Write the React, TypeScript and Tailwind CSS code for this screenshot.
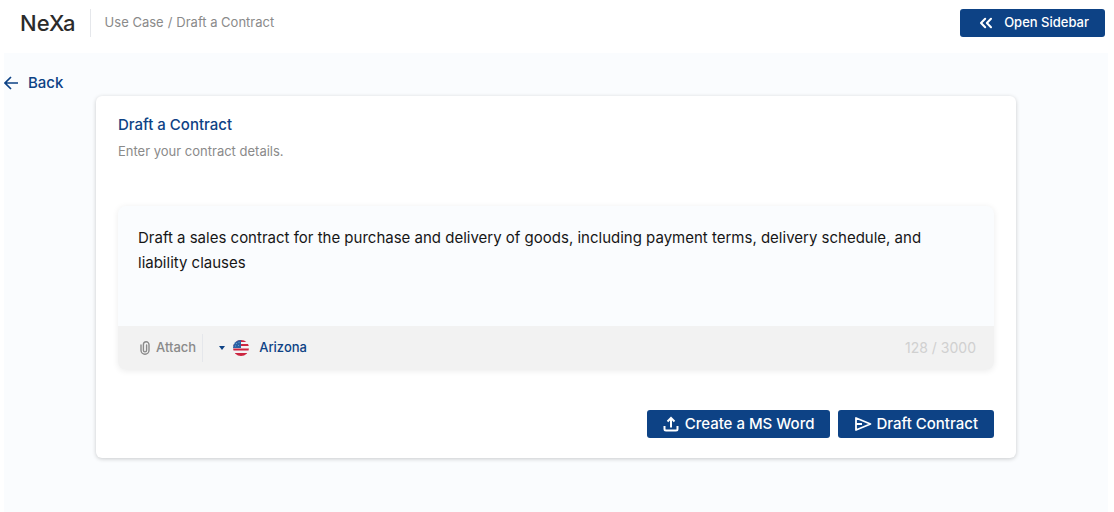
import { useState } from 'react';
import { ChevronsLeft } from 'lucide-react';

const MAX_LENGTH = 3000;

const buttonClass =
  'flex h-7 items-center rounded-[3px] bg-[#0d4285] px-4 font-medium text-white hover:bg-[#0a3569]';

function BackIcon() {
  return (
    <svg viewBox="0 0 14 14" className="h-3.5 w-3.5" fill="none" stroke="currentColor" strokeWidth="1.7" aria-hidden="true">
      <path d="M14 7H1M7 1 1 7l6 6" />
    </svg>
  );
}

function ClipIcon() {
  return (
    <svg viewBox="0 0 10 14" className="h-3.5 w-2.5" fill="none" stroke="currentColor" strokeWidth="1.4" strokeLinecap="round" aria-hidden="true">
      <path d="M1 4v5.3a4 4 0 0 0 8 0V3.6a2.8 2.8 0 0 0-5.6 0v5.7a1.6 1.6 0 0 0 3.2 0V4" />
    </svg>
  );
}

function UploadIcon() {
  return (
    <svg viewBox="0 0 16 16" className="h-4 w-4" fill="none" stroke="currentColor" strokeWidth="2" aria-hidden="true">
      <path d="M8 11.5V3M4.5 5.5 8 2l3.5 3.5M1.5 10v3q0 1.5 1.5 1.5h10q1.5 0 1.5-1.5v-3" />
    </svg>
  );
}

function SendIcon() {
  return (
    <svg viewBox="0 0 18 16" className="h-4 w-[18px]" fill="none" stroke="currentColor" strokeWidth="1.8" strokeLinejoin="round" aria-hidden="true">
      <path d="M2 2 16.5 8 2 14V2ZM2 8h6" />
    </svg>
  );
}

function FlagIcon() {
  return (
    <svg viewBox="0 0 16 16" className="h-4 w-4" aria-hidden="true">
      <defs>
        <clipPath id="flag-circle">
          <circle cx="8" cy="8" r="8" />
        </clipPath>
      </defs>
      <g clipPath="url(#flag-circle)">
        <path fill="#f4f1f4" d="M0 0h16v16H0z" />
        <path fill="#cc2540" d="M0 0h16v2H0zM0 4h16v2H0zM0 8.5h16v2H0zM0 13h16v3H0z" />
        <path fill="#2c62a4" d="M0 0h8v8H0z" />
        <path fill="#6f99c8" d="M3 3h1v1H3zM5.5 2h1v1h-1zM2 5.5h1v1H2zM5 5h1v1H5z" />
      </g>
    </svg>
  );
}

export default function App() {
  const [prompt, setPrompt] = useState(
    'Draft a sales contract for the purchase and delivery of goods, including payment terms, delivery schedule, and liability clauses'
  );
  const [state, setState] = useState('Arizona');

  return (
    <div className="flex min-h-screen flex-col bg-white font-['Inter','Open_Sans',sans-serif]">
      <header className="flex items-center justify-between pt-[9px] pr-[9px] pb-2 pl-5">
        <div className="flex items-center">
          <span className="text-[22px] leading-7 font-medium text-[#2b2b2b]">NeXa</span>
          <nav
            aria-label="Breadcrumb"
            className="ml-3.5 flex h-7 items-center gap-1 border-l border-gray-200 pl-3.5 text-[13px] text-[#8a8a8a]"
          >
            <a href="#use-case">Use Case</a>
            <span>/</span>
            <a href="#draft">Draft a Contract</a>
          </nav>
        </div>
        <button type="button" className={`${buttonClass} gap-2 text-[13px]`}>
          <ChevronsLeft className="h-5 w-5" strokeWidth={2.5} />
          Open Sidebar
        </button>
      </header>

      <main className="mr-1.5 ml-1 mt-2 flex-1 bg-[#fafcfe] pt-5">
        <a
          href="#back"
          className="flex h-5 w-fit items-center gap-2.5 text-[15px] font-medium text-[#0d4285]"
        >
          <BackIcon />
          Back
        </a>

        <section className="mx-auto mt-[3px] w-5/6 rounded-md bg-white px-[22px] pt-[19px] pb-5 shadow-[0_1px_4px_rgba(0,0,0,0.2)]">
          <h1 className="text-[15px] leading-5 font-medium text-[#0d4285]">Draft a Contract</h1>
          <p className="mt-1.5 text-[13px] leading-5 text-[#8a8a8a]">Enter your contract details.</p>

          <div className="mt-[45px] overflow-hidden rounded-lg bg-[#fafcfe] shadow-[0_1px_6px_rgba(0,0,0,0.08)]">
            <textarea
              aria-label="Contract details"
              value={prompt}
              maxLength={MAX_LENGTH}
              onChange={(e) => setPrompt(e.target.value)}
              className="block h-30 w-full resize-none bg-transparent pt-[19px] pr-8 pl-5 text-[15px] leading-[25px] text-[#161616] outline-none"
            />
            <div className="flex h-11 items-center bg-[#f2f2f2] pr-[18px] pl-[22px]">
              <button
                type="button"
                className="flex h-7 items-center gap-1.5 border-r border-gray-200 pr-1.5 text-[13px] font-medium text-[#8a8a8a]"
              >
                <ClipIcon />
                Attach
              </button>
              <label className="ml-4 flex items-center gap-2 text-[#0d4285]">
                <svg viewBox="0 0 6 4" className="h-1 w-1.5" fill="currentColor" aria-hidden="true">
                  <path d="M0 0h6L3 4z" />
                </svg>
                <FlagIcon />
                <select
                  aria-label="State"
                  value={state}
                  onChange={(e) => setState(e.target.value)}
                  className="ml-0.5 appearance-none bg-transparent text-[13px] font-medium outline-none"
                >
                  <option>Arizona</option>
                </select>
              </label>
              <span className="ml-auto text-sm text-[#d0d0d0]">
                {prompt.length} / {MAX_LENGTH}
              </span>
            </div>
          </div>

          <div className="mt-10 flex justify-end gap-2">
            <button type="button" className={`${buttonClass} gap-1.5 text-[15px]`}>
              <UploadIcon />
              Create a MS Word
            </button>
            <button type="button" className={`${buttonClass} gap-1 text-[15px]`}>
              <SendIcon />
              Draft Contract
            </button>
          </div>
        </section>
      </main>
    </div>
  );
}
